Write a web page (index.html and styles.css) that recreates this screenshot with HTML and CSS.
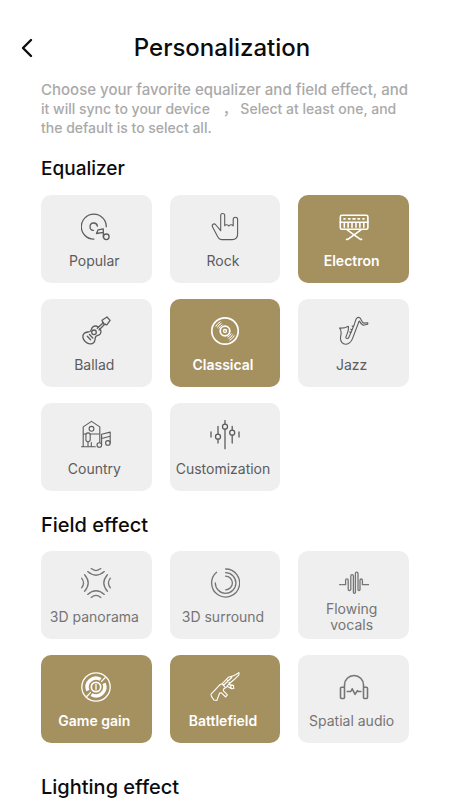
FILE: index.html
```html
<!DOCTYPE html>
<html lang="en">
<head>
    <meta charset="UTF-8">
    <meta name="viewport" content="width=device-width, initial-scale=1">
    <title>Personalization</title>
    <link rel="stylesheet" href="styles.css">
</head>
<body>

<header class="topbar">
    <button type="button" class="back" aria-label="Back">
        <svg width="12" height="20" viewBox="0 0 12 20"><path d="M10 2 2 10l8 8"/></svg>
    </button>
    <h1>Personalization</h1>
</header>

<main class="content">
    <p class="intro">Choose your favorite equalizer and field effect, and<br>it will sync to your device <span class="comma">，</span> Select at least one, and<br>the default is to select all.</p>

    <h2>Equalizer</h2>
    <div class="grid">
        <label class="tile">
            <input type="checkbox" name="equalizer" value="popular">
            <svg class="icon" viewBox="0 0 30 30">
                <path d="M25.3 14.7A12.5 12.5 0 1 0 12.8 27.2"/>
                <path d="M16.4 14.2a3.7 3.7 0 1 0-4 4.2"/>
                <path d="M15.5 21.5l1.6-3.7 5.2-1v8.4M15.5 21.5l6.8-1.2"/>
                <circle cx="25.3" cy="24.8" r="2.8"/>
            </svg>
            <span class="name">Popular</span>
        </label>
        <label class="tile">
            <input type="checkbox" name="equalizer" value="rock">
            <svg class="icon thin" viewBox="0 0 30 30">
                <path d="M10.7 18.700V3.500a2 2 0 0 1 4 0v10.200c1-1.400 3.200-1.200 4.100.4 1-1.600 3.300-1.800 4.400-.3V7.500a2.200 2.200 0 0 1 4.400 0V22c0 3.500-2.200 5.600-5.400 5.600H11.600c-1.800 0-2.800-.8-3.600-2.300L2.700 15.200c-1.500-2.800 1.300-4.400 3.200-2.200l4.800 5.700"/>
            </svg>
            <span class="name">Rock</span>
        </label>
        <label class="tile">
            <input type="checkbox" name="equalizer" value="electron" checked>
            <svg class="icon bold" viewBox="0 0 30 30">
                <rect x="1.300" y="3.300" width="27.600" height="14" rx="1.600"/>
                <path d="M1.300 10.200h27.600M5 6.900h1M9.500 6.900h1.500M14 6.900h2M19 6.900h1.500M24 6.900h1"/>
                <path d="M5.300 11v4.200M9.100 11v4.200M13 11v4.200M17 11v4.200M20.900 11v4.200M24.800 11v4.200"/>
                <path d="M7.600 27.400h1.200L22 17.800M22.600 27.400h-1.200L8.200 17.800"/>
            </svg>
            <span class="name">Electron</span>
        </label>
        <label class="tile">
            <input type="checkbox" name="equalizer" value="ballad">
            <svg class="icon" viewBox="0 0 30 30">
                <path d="M17.300 11.200c-2-1.800-5-1.600-6.300.7-.8 1.500-.6 2.900-2 3.600-1.600.7-4 .3-5.700 1.800-2.400 2.100-1.600 5.900.9 8.200 2.600 2.500 6.400 3.400 8.600 1 1.600-1.700 1-4 1.800-5.600.7-1.300 2.100-1.300 3.500-2 2.400-1.400 2.300-4.400.7-6.200"/>
                <circle cx="13" cy="16.300" r="2.300"/>
                <path d="M16.300 12.300l6.200-5.800M18 14l6-6"/>
                <path d="M22.300 7.800l-1.300-3.600 5-3.200 3.100 3.400-3.300 4.400z"/>
                <path d="M6.300 20.300l3.300 3.500M8.500 18.500l3.300 3.500"/>
            </svg>
            <span class="name">Ballad</span>
        </label>
        <label class="tile">
            <input type="checkbox" name="equalizer" value="classical" checked>
            <svg class="icon" viewBox="0 0 30 30">
                <circle class="rim" cx="15" cy="15" r="13.200"/>
                <circle class="rim" cx="15" cy="15" r="4.800"/>
                <circle cx="15" cy="15" r="1.500"/>
                <g class="groove">
                    <path d="M5.800 10.200a10.400 10.400 0 0 1 4.400-4.400M7.400 11.200a8.500 8.500 0 0 1 3.800-3.800M9 12.200a6.700 6.700 0 0 1 3.200-3.200"/>
                    <path d="M24.200 19.800a10.400 10.400 0 0 1-4.400 4.400M22.600 18.800a8.500 8.500 0 0 1-3.800 3.800M21 17.800a6.700 6.700 0 0 1-3.200 3.200"/>
                </g>
            </svg>
            <span class="name">Classical</span>
        </label>
        <label class="tile">
            <input type="checkbox" name="equalizer" value="jazz">
            <svg class="icon thin" viewBox="0 0 30 30">
                <path d="M28.800 6.800l-4 .3c-1.700-.5-2.400-2.800-3.300-4.500-.8-1.500-3.100-1.700-4.200.1-.8 1.500-1.300 3.500-2 5.800L9.900 21.300c-.6 1.600-3.600 1.900-2.900-.6 1-2.900 3-5.100 2.400-10.500-2.900 1.500-5.900 2.200-8.900 1.800 2.700 3 1.700 5.300 1.100 8.900-.7 4.500 2.100 7.500 5.400 7.300 3.800-.2 5.300-2.700 6.500-5.600L19.300 7.200c.4-1.100.7-1.900 1.100-2.100.9 1.600 1.900 3.400 3.700 4.200l4.600-1z"/>
                <path d="M13 13.800l-1.300-.5M12 16.400l-1.300-.5M14.500 10.500l-1.300-.6"/>
            </svg>
            <span class="name">Jazz</span>
        </label>
        <label class="tile">
            <input type="checkbox" name="equalizer" value="country">
            <svg class="icon thin" viewBox="0 0 30 30">
                <path d="M2.200 26.500V6.900l8.300-5.500 8.300 5.500v15.500M2.200 14h2.600M9.200 14h9.600"/>
                <circle cx="10.500" cy="8.800" r="2.400"/>
                <rect x="4.900" y="12.900" width="4.300" height="8.800" rx="2.100"/>
                <path d="M7 21.700v4.800M10.300 22.600v3.900M.5 26.700h13.800"/>
                <circle cx="18.300" cy="25" r="2.300"/>
                <circle cx="26.900" cy="22.900" r="2.300"/>
                <path d="M20.600 25V14.300l8.600-2.200v10.800M20.600 18.500l8.600-2.200"/>
            </svg>
            <span class="name">Country</span>
        </label>
        <label class="tile">
            <input type="checkbox" name="equalizer" value="customization">
            <svg class="icon" viewBox="0 0 30 30">
                <path d="M1 12v5M8 6.500v7.700M8 19.200V23M15 .5v3.700M15 9.200v19.500M22.200 6.500v3.700M22.200 15.200V23M29 12v5"/>
                <circle cx="8" cy="16.700" r="2.500"/>
                <circle cx="15" cy="6.700" r="2.500"/>
                <circle cx="22.200" cy="12.700" r="2.500"/>
            </svg>
            <span class="name">Customization</span>
        </label>
    </div>

    <h2>Field effect</h2>
    <div class="grid field">
        <label class="tile">
            <input type="checkbox" name="field" value="panorama">
            <svg class="icon" viewBox="0 0 30 30">
                <g id="waves">
                    <path d="M10.200.6q4.800 3.900 9.600 0M6.700 3.600q8.300 7.200 16.600 0"/>
                </g>
                <use href="#waves" transform="rotate(90 15 15)"/>
                <use href="#waves" transform="rotate(180 15 15)"/>
                <use href="#waves" transform="rotate(270 15 15)"/>
            </svg>
            <span class="name">3D panorama</span>
        </label>
        <label class="tile">
            <input type="checkbox" name="field" value="surround">
            <svg class="icon" viewBox="0 0 30 30">
                <path d="M6.600 4.300A14 14 0 1 0 15.600 1"/>
                <path d="M5.300 15A10.300 10.300 0 1 0 15.600 4.700"/>
                <path d="M15.600 8.200a6.800 6.800 0 0 1 0 13.600"/>
            </svg>
            <span class="name">3D surround</span>
        </label>
        <label class="tile two-line">
            <input type="checkbox" name="field" value="vocals">
            <svg class="icon" viewBox="0 0 30 30">
                <path d="M.6 16.700h1.600M3.400 16.700h3.200v-4.500a1.300 1.300 0 0 1 2.600 0v9a1.300 1.300 0 0 0 2.600 0V8a1.300 1.300 0 0 1 2.600 0v16.300a1 1 0 0 0 2 0V5.500a1.300 1.300 0 0 1 2.600 0v16a1 1 0 0 0 2 0v-9.300a1.200 1.200 0 0 1 2.400 0v4.500h6.400"/>
            </svg>
            <span class="name">Flowing<br>vocals</span>
        </label>
        <label class="tile">
            <input type="checkbox" name="field" value="game" checked>
            <svg class="icon" viewBox="0 0 30 30">
                <circle cx="15" cy="15" r="14.200"/>
                <path class="ring" d="M6.900 18.600A8.900 8.900 0 0 1 19.600 7.400M23.100 11.400A8.900 8.900 0 0 1 10.400 22.600"/>
                <circle class="rim" cx="15" cy="15" r="4.700"/>
                <path d="M20.600 9.400l3.400-3.700M9.400 20.600L6 24.300M15 12.500v5"/>
            </svg>
            <span class="name">Game gain</span>
        </label>
        <label class="tile">
            <input type="checkbox" name="field" value="battlefield" checked>
            <svg class="icon thin" viewBox="0 0 30 30">
                <path d="M28.900.8v2l-5 5M10 12.700L.9 22.400l.6 2 2.300 3.600 3.100.4 2.700-7.400 1.900-.2 4.200 4.200 1.700-2.100-4-4 .4-2.200 2.600-1.400 2.100-3.100 5.400-4.400"/>
                <path d="M10 12.700l2.100-.9 6.200-6.500 3.400-.9 3.800-1.700 3.400-1.900M12.100 11.800l2.800 3M13.300 13.500l8.400-8M17.200 8l2.300 2.700"/>
                <path d="M17.500 14.600l3.600 2 2.700-.1-.4-3.100-4.300-.8M20.600 13.200l.5 3.200"/>
            </svg>
            <span class="name">Battlefield</span>
        </label>
        <label class="tile">
            <input type="checkbox" name="field" value="spatial">
            <svg class="icon bold" viewBox="0 0 30 30">
                <rect x="1.500" y="15.300" width="4" height="11.200" rx="1"/>
                <rect x="24.500" y="15.300" width="4" height="11.200" rx="1"/>
                <path d="M5.500 15.300V13a9.500 9.500 0 0 1 19 0v2.300"/>
                <path d="M8.200 19.500h3.600l1.400-2.700 2.900 5.600 2.300-3.700.9.800h2.600"/>
            </svg>
            <span class="name">Spatial audio</span>
        </label>
    </div>

    <h2 class="next">Lighting effect</h2>
</main>

</body>
</html>
```

FILE: styles.css
```css
* {
    box-sizing: border-box;
}
body {
    margin: 0;
    background: #fff;
    color: #0c0c0c;
    font-family: Inter, "Noto Sans CJK SC", sans-serif;
}
h1, h2, p {
    margin: 0;
}
.topbar {
    display: grid;
    grid-template-columns: 40px 1fr 40px;
    align-items: center;
    padding: 32px 6px 0 0;
}
.back {
    display: flex;
    justify-content: flex-end;
    padding: 6px 7px 6px 0;
    border: none;
    background: none;
    cursor: pointer;
}
.back svg {
    fill: none;
    stroke: #0c0c0c;
    stroke-width: 2.4;
    stroke-linecap: round;
    stroke-linejoin: round;
}
h1 {
    text-align: center;
    font-size: 24px;
    line-height: 32px;
    font-weight: 500;
}
.content {
    padding: 16px 41px 0;
}
.intro {
    color: #a9a9a9;
    font-size: 14px;
    line-height: 19px;
    font-weight: 500;
    white-space: nowrap;
}
.intro::first-line {
    font-size: 15px;
}
.comma {
    padding-left: 9px;
    line-height: 1;
}
h2 {
    margin: 22px 0 14px;
    font-size: 20px;
    line-height: 24px;
    font-weight: 500;
}
.intro + h2 {
    margin-top: 20px;
    font-size: 19px;
}
.next {
    margin: 32px 0 0;
}
.grid {
    display: grid;
    grid-template-columns: repeat(3, 1fr);
    gap: 16px 18px;
}
.tile {
    position: relative;
    display: flex;
    flex-direction: column;
    align-items: center;
    gap: 11px;
    height: 88px;
    padding-top: 17px;
    border-radius: 10px;
    background: #efefef;
    color: #5c5c5c;
    cursor: pointer;
}
.tile input {
    position: absolute;
    inset: 0;
    width: 100%;
    height: 100%;
    margin: 0;
    opacity: 0;
    cursor: pointer;
}
.tile:has(input:checked) {
    background: #a59060;
    color: #fff;
}
.tile:has(input:focus-visible) {
    outline: 2px solid #0c0c0c;
}
.two-line {
    gap: 3px;
}
.name {
    padding-right: 4px;
    font-size: 14px;
    line-height: 16px;
    text-align: center;
    white-space: nowrap;
}
.tile:has(input:checked) .name {
    font-weight: 600;
}
.field .tile {
    color: #757575;
}
.field .tile:has(input:checked) {
    color: #fff;
}
.icon {
    flex: none;
    width: 30px;
    height: 30px;
    fill: none;
    stroke: currentColor;
    stroke-width: 1.3;
    stroke-linecap: round;
    stroke-linejoin: round;
}
.thin {
    stroke-width: 1.1;
}
.bold {
    stroke-width: 1.6;
}
.rim {
    stroke-width: 1.7;
}
.ring {
    stroke-width: 3.4;
    stroke-linecap: butt;
}
.groove {
    stroke-width: 1;
}
```
